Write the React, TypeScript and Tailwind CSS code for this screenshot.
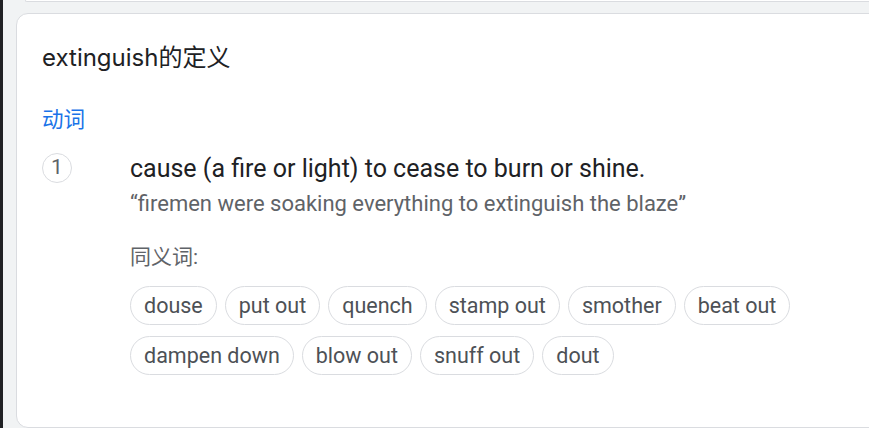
const synonymRows = [
  ["douse", "put out", "quench", "stamp out", "smother", "beat out"],
  ["dampen down", "blow out", "snuff out", "dout"],
];

const cjk = "font-['Roboto','Noto_Sans_CJK_SC',sans-serif]";

function Chip({ label }: { label: string }) {
  return (
    <span className="inline-flex h-[39px] items-center rounded-full border border-[#dadce0] px-[13px] text-[21.5px] leading-none text-[#4d5156]">
      {label}
    </span>
  );
}

export default function App() {
  return (
    <div className="flex h-[428px] w-[869px] overflow-hidden bg-[#f1f3f4]">
      <div className="w-[3px] shrink-0 bg-[#202124]" />
      <div className="flex flex-1 flex-col pl-[13px]">
        {/* tail of the card above */}
        <div className="ml-[9px] h-[2px] w-[900px] shrink-0 rounded-bl-[12px] border-b border-l border-[#dadce0] bg-white" />
        <div className="mt-[11px] h-[415px] w-[900px] shrink-0 rounded-[12px] border border-[#dadce0] bg-white pl-[25px] pt-[28px]">
          <h2 className="font-['Inter','Noto_Sans_CJK_SC',sans-serif] text-[24px] leading-[32px] text-[#202124]">
            extinguish的定义
          </h2>
          <div className={`${cjk} mt-[32px] text-[21.5px] leading-[28px] text-[#1a73e8]`}>动词</div>

          <div className={`${cjk} mt-[19px] flex`}>
            <div className="w-[88px] shrink-0">
              <span className="flex h-[30px] w-[30px] items-center justify-center rounded-full border border-[#dadce0] text-[21px] text-[#5f6368]">
                1
              </span>
            </div>
            <div className="flex flex-col">
              <p className="text-[25px] leading-[32px] text-[#202124]">
                cause (a fire or light) to cease to burn or shine.
              </p>
              <p className="mt-[4px] text-[22px] leading-[30px] text-[#5f6368]">
                “firemen were soaking everything to extinguish the blaze”
              </p>
              <p className="mt-[23px] text-[21px] leading-[30px] text-[#5f6368]">同义词:</p>
              <div className="mt-[14px] flex flex-col gap-[11px]">
                {synonymRows.map((row, i) => (
                  <div key={i} className="flex gap-[8px]">
                    {row.map((s) => (
                      <Chip key={s} label={s} />
                    ))}
                  </div>
                ))}
              </div>
            </div>
          </div>
        </div>
      </div>
    </div>
  );
}
